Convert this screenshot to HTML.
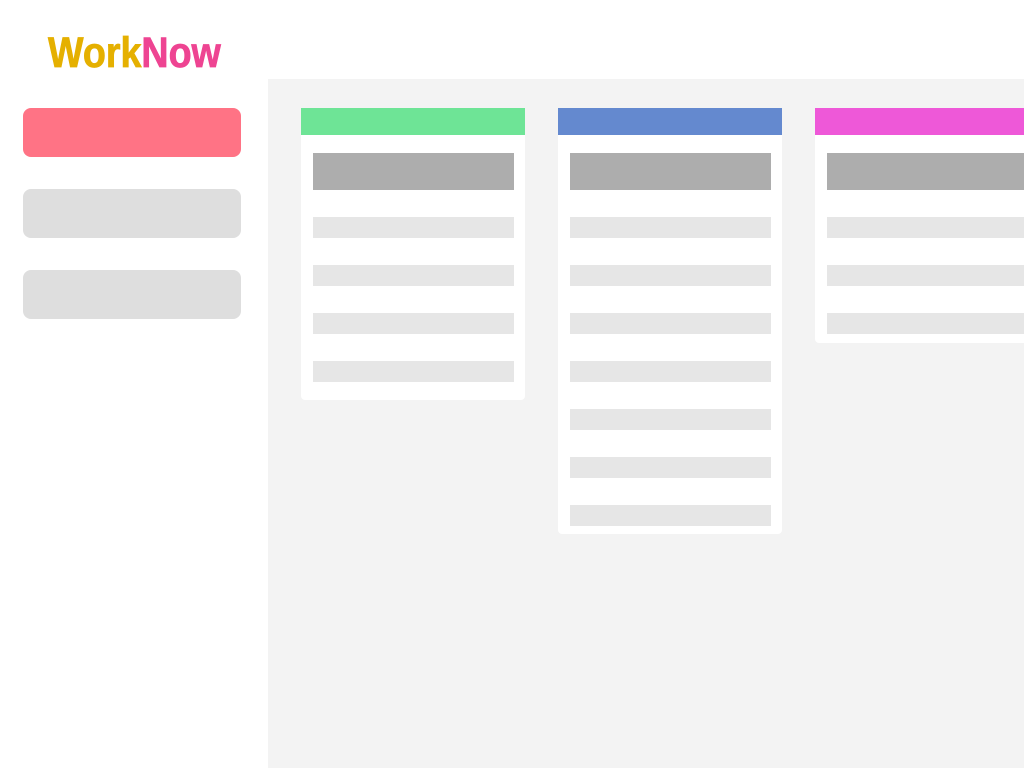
<!DOCTYPE html>
<html><head><style>
*{margin:0;padding:0;box-sizing:border-box}
body{width:1024px;height:768px;background:#fff;position:relative;overflow:hidden;font-family:"Liberation Sans",sans-serif}
.logo{position:absolute;left:48px;top:29px;font-size:43px;font-weight:bold;transform:scaleX(0.875);transform-origin:left top;white-space:nowrap;-webkit-text-stroke:0.8px currentColor}
.y{color:#e5b000}.p{color:#ee4492}
.nav{position:absolute;left:23px;width:218px;height:49px;border-radius:8px;background:#dedede}
.main{position:absolute;left:268px;top:79px;width:756px;height:689px;background:#f3f3f3}
.col{position:absolute;top:108px;width:224px;background:#fff;border-radius:0 0 4px 4px}
.hd{height:27px}
.t{position:absolute;left:12px;width:201px;height:37px;top:45px;background:#adadad}
.r{position:absolute;left:12px;width:201px;height:21px;background:#e6e6e6}
</style></head><body>
<div class="logo"><span class="y">Work</span><span class="p">Now</span></div>
<div class="nav" style="top:108px;background:#ff7385"></div>
<div class="nav" style="top:189px"></div>
<div class="nav" style="top:270px"></div>
<div class="main"></div>
<div class="col" style="left:301px;height:292px"><div class="hd" style="background:#6ee496"></div><div class="t"></div>
<div class="r" style="top:109px"></div><div class="r" style="top:157px"></div><div class="r" style="top:205px"></div><div class="r" style="top:253px"></div></div>
<div class="col" style="left:558px;height:426px"><div class="hd" style="background:#6489cf"></div><div class="t"></div>
<div class="r" style="top:109px"></div><div class="r" style="top:157px"></div><div class="r" style="top:205px"></div><div class="r" style="top:253px"></div><div class="r" style="top:301px"></div><div class="r" style="top:349px"></div><div class="r" style="top:397px"></div></div>
<div class="col" style="left:815px;height:235px"><div class="hd" style="background:#ee58d8"></div><div class="t"></div>
<div class="r" style="top:109px"></div><div class="r" style="top:157px"></div><div class="r" style="top:205px"></div></div>
</body></html>
